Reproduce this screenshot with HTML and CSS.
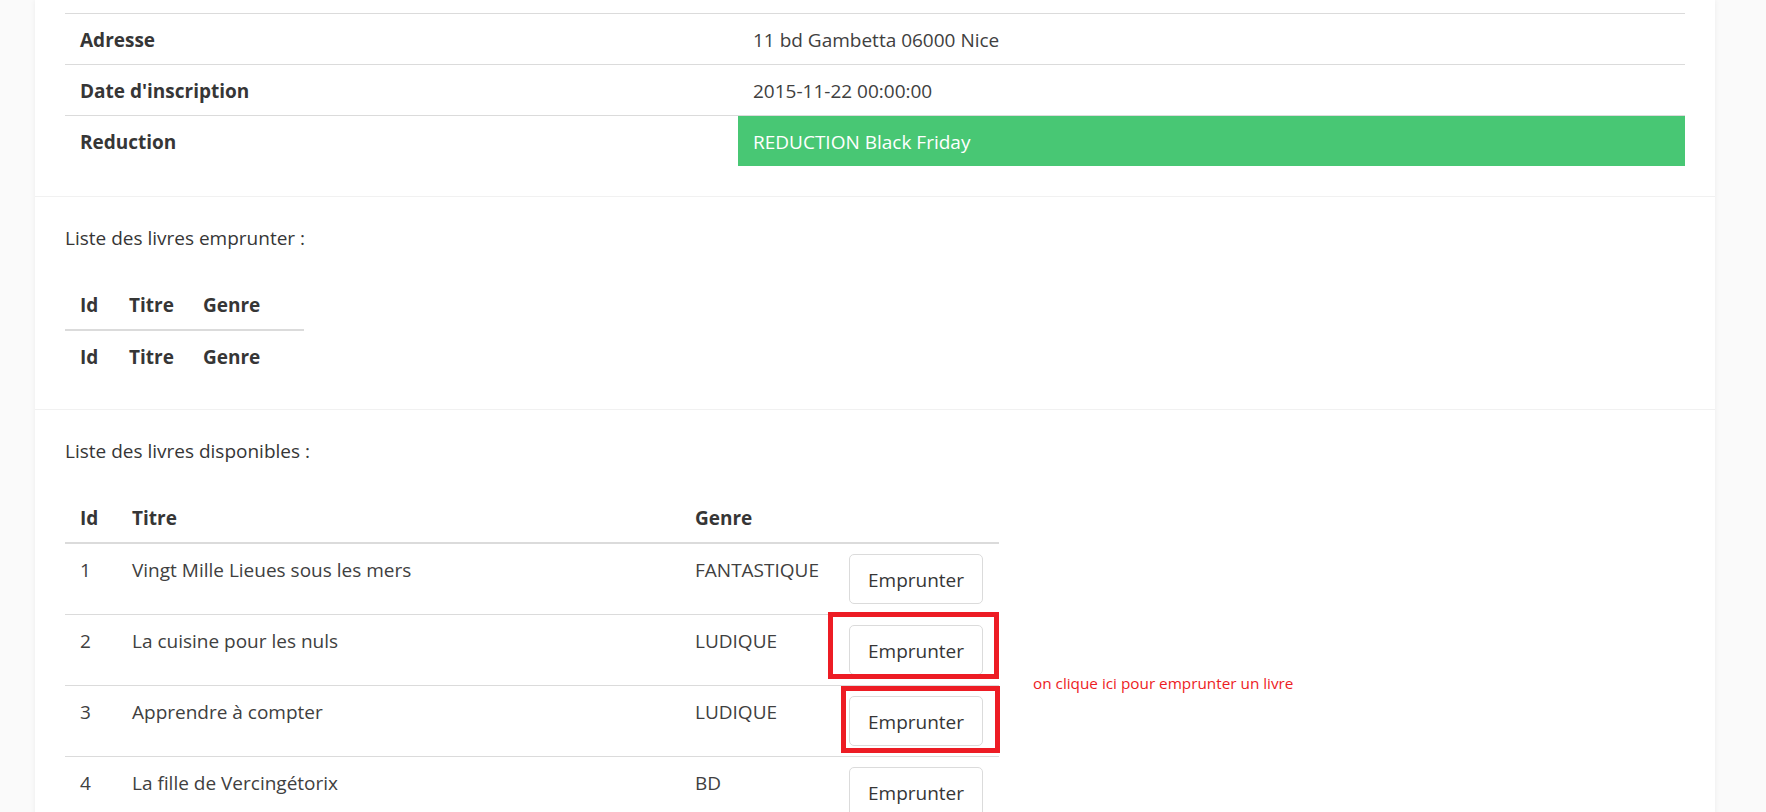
FILE: index.html
```html
<!DOCTYPE html>
<html lang="fr">
<head>
<meta charset="utf-8">
<title>Adhérent</title>
<link rel="stylesheet" href="styles.css">
</head>
<body>
<div class="card">
  <section class="sec sec-first">
    <table class="tbl info">
      <colgroup><col class="c-label"><col class="c-value"></colgroup>
      <tbody>
        <tr><th>Adresse</th><td>11 bd Gambetta 06000 Nice</td></tr>
        <tr><th>Date d'inscription</th><td>2015-11-22 00:00:00</td></tr>
        <tr><th>Reduction</th><td class="success">REDUCTION Black Friday</td></tr>
      </tbody>
    </table>
  </section>
  <section class="sec">
    <p class="title">Liste des livres emprunter :</p>
    <table class="tbl borrowed">
      <colgroup><col class="b-id"><col class="b-titre"><col class="b-genre"><col class="b-act"></colgroup>
      <thead><tr><th>Id</th><th>Titre</th><th>Genre</th><th></th></tr></thead>
      <tfoot><tr><th>Id</th><th>Titre</th><th>Genre</th><th></th></tr></tfoot>
    </table>
  </section>
  <section class="sec">
    <p class="title">Liste des livres disponibles :</p>
    <table class="tbl books">
      <colgroup><col class="k-id"><col class="k-titre"><col class="k-genre"><col class="k-act"></colgroup>
      <thead><tr><th>Id</th><th>Titre</th><th>Genre</th><th></th></tr></thead>
      <tbody>
        <tr><td>1</td><td>Vingt Mille Lieues sous les mers</td><td>FANTASTIQUE</td><td class="act"><button class="btn">Emprunter</button></td></tr>
        <tr><td>2</td><td>La cuisine pour les nuls</td><td>LUDIQUE</td><td class="act"><button class="btn">Emprunter</button></td></tr>
        <tr><td>3</td><td>Apprendre à compter</td><td>LUDIQUE</td><td class="act"><button class="btn">Emprunter</button></td></tr>
        <tr><td>4</td><td>La fille de Vercingétorix</td><td>BD</td><td class="act"><button class="btn">Emprunter</button></td></tr>
      </tbody>
    </table>
  </section>
</div>
<div class="mark mark-1"></div>
<div class="mark mark-2"></div>
<div class="note">on clique ici pour emprunter un livre</div>
</body>
</html>
```
FILE: styles.css
```css
html, body {
  margin: 0;
  padding: 0;
}
body {
  background: #fafafa;
  font-family: "Open Sans", "Noto Sans", sans-serif;
  font-size: 19px;
  line-height: 30px;
  color: #404040;
  overflow: hidden;
  height: 812px;
}
.card {
  margin: 0 51px 0 35px;
  background: #fff;
  box-shadow: 0 0 5px rgba(10, 10, 10, 0.06);
  min-height: 900px;
}
.sec {
  padding: 26px 30px 28px;
  border-top: 1px solid #f1f1f1;
}
.sec-first {
  padding: 13px 30px 30px;
  border-top: 0;
}
.title {
  margin: 0 0 26px;
  padding-top: 0;
  height: 30px;
  color: #363636;
}
.tbl {
  border-collapse: collapse;
  border-spacing: 0;
  table-layout: fixed;
}
.tbl th, .tbl td {
  padding: 11px 15px 9px;
  text-align: left;
  vertical-align: top;
  border: 0;
  border-bottom: 1px solid #dbdbdb;
}
.tbl th {
  color: #363636;
  font-weight: 700;
}
.tbl thead th {
  border-bottom: 2px solid #dbdbdb;
}
.tbl tbody tr:last-child td,
.tbl tbody tr:last-child th,
.tbl tfoot th {
  border-bottom: 0;
}
.info { width: 1620px; }
.info tr:first-child > * { border-top: 1px solid #dbdbdb; }
.c-label { width: 673px; }
.c-value { width: 947px; }
.success {
  background: #48c774;
  color: #fff;
}
.borrowed { width: 239px; }
.b-id { width: 49px; }
.b-titre { width: 74px; }
.b-genre { width: 85px; }
.b-act { width: 31px; }
.books { width: 934px; }
.k-id { width: 52px; }
.k-titre { width: 563px; }
.k-genre { width: 154px; }
.k-act { width: 165px; }
.tbl td.act {
  padding: 10px 15px;
}
.btn {
  display: inline-flex;
  align-items: center;
  justify-content: center;
  box-sizing: border-box;
  height: 50px;
  padding: 2px 18px 0;
  border: 1px solid #dbdbdb;
  border-radius: 5px;
  background: #fff;
  color: #363636;
  font: inherit;
  line-height: 30px;
}
.mark {
  position: absolute;
  border: 5px solid #ed1c24;
  box-sizing: border-box;
}
.mark-1 { left: 828px; top: 612px; width: 171px; height: 67px; }
.mark-2 { left: 841px; top: 686px; width: 159px; height: 67px; }
.note {
  position: absolute;
  left: 1033px;
  top: 673px;
  font-size: 15.3px;
  line-height: 20px;
  color: #ed1c24;
}
```
